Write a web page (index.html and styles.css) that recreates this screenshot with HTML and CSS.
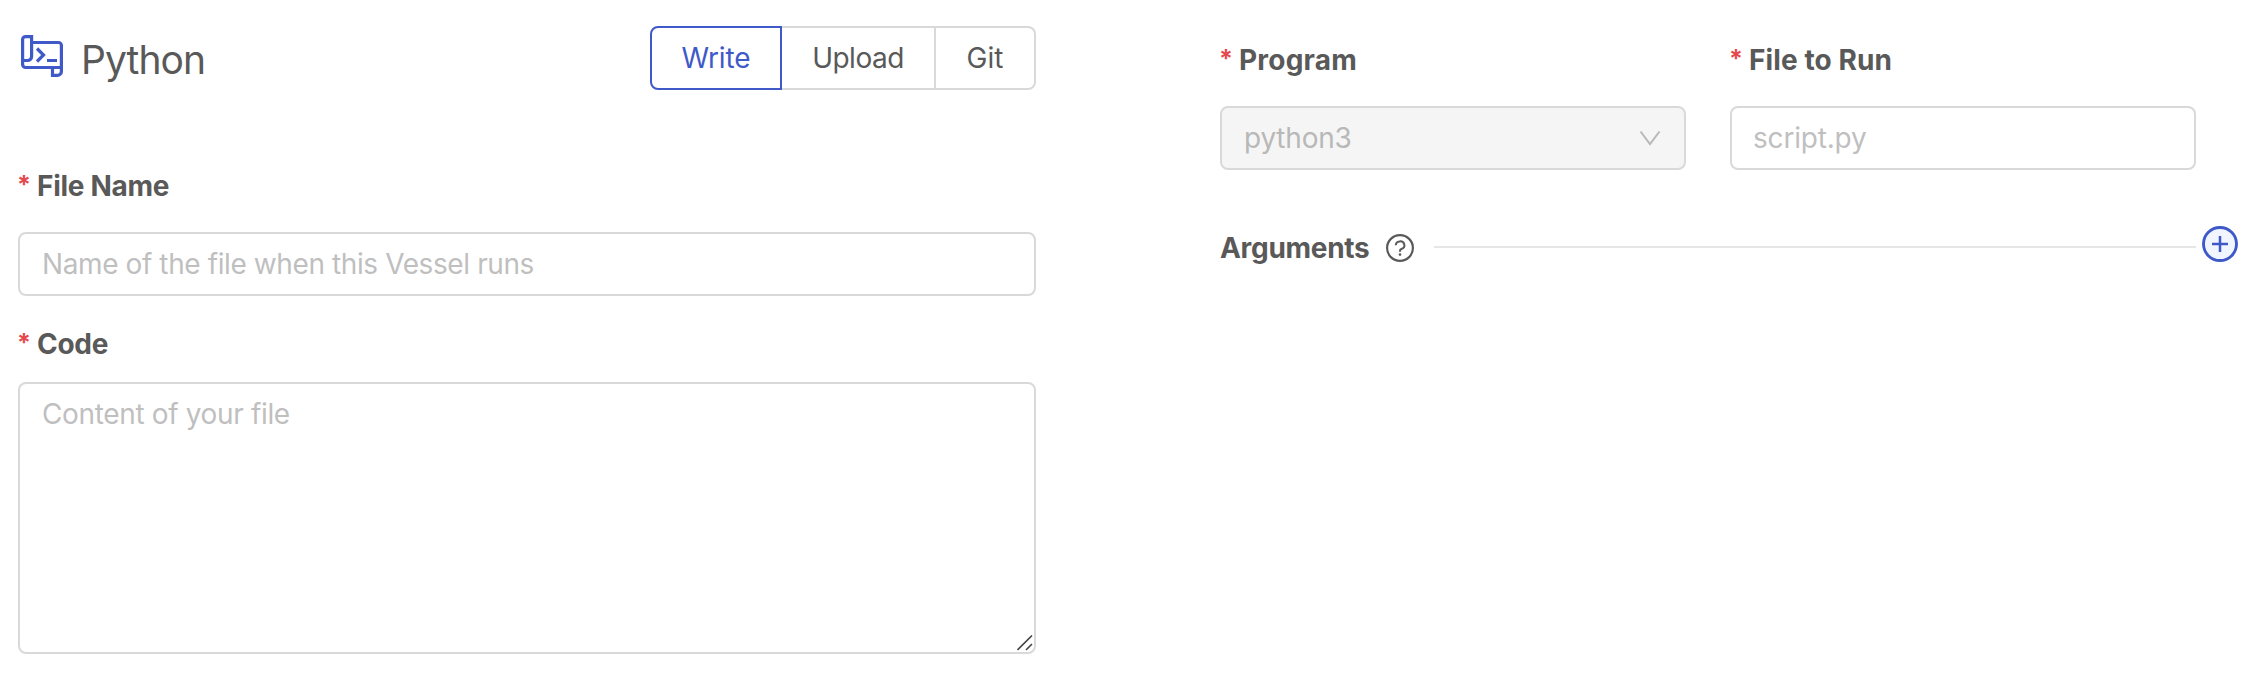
FILE: index.html
```html
<!DOCTYPE html>
<html lang="en">
<head>
<meta charset="utf-8">
<title>Python</title>
<link rel="stylesheet" href="styles.css">
</head>
<body>
<main class="page">
  <section class="source">
    <header class="source-head">
      <svg class="logo" width="42" height="42" viewBox="0 0 42 42" fill="none" stroke="currentColor" stroke-width="3.200">
        <path d="M1.600 26V4.600a3 3 0 0 1 3-3h6V21.500a4 4 0 0 1-4 4H1.600"/>
        <path d="M12 7.500H37.400a3 3 0 0 1 3 3V32.500H4.600a3 3 0 0 1-3-3V24"/>
        <path d="M31.500 32.500v7.900H36.400a4 4 0 0 0 4-4V31"/>
        <path d="M16 13.500l6.500 6.500-6.500 6.500M26 25.500h10"/>
      </svg>
      <h1 class="title">Python</h1>
      <div class="tabs">
        <button class="tab tab-active">Write</button>
        <button class="tab tab-upload">Upload</button>
        <button class="tab tab-git">Git</button>
      </div>
    </header>
    <label class="label label-name"><span class="star">*</span>File Name</label>
    <input class="field f-name" placeholder="Name of the file when this Vessel runs">
    <label class="label label-code"><span class="star">*</span>Code</label>
    <div class="area-wrap">
      <textarea class="field area" placeholder="Content of your file"></textarea>
      <svg class="grip" width="16" height="16" viewBox="0 0 16 16" fill="none" stroke="#444" stroke-width="1.600"><path d="M.5 15L15 .5M9 15l6-6"/></svg>
    </div>
  </section>
  <section class="run">
    <div class="cols">
      <div class="col">
        <label class="label label-program"><span class="star">*</span>Program</label>
        <div class="field select">python3
          <svg width="22" height="16" viewBox="0 0 22 16" fill="none" stroke="#b8b8b8" stroke-width="2"><path d="M1.500 1.500L11 14 20.500 1.500"/></svg>
        </div>
      </div>
      <div class="col">
        <label class="label label-run"><span class="star">*</span>File to Run</label>
        <input class="field f-script" placeholder="script.py">
      </div>
    </div>
    <div class="args">
      <span class="args-title">Arguments</span>
      <svg class="help" width="28" height="28" viewBox="0 0 28 28" fill="none" stroke="currentColor" stroke-width="2.200"><circle cx="14" cy="14" r="12.900"/><path d="M9.800 11.300a4.300 3.900 0 1 1 5.600 3.700c-1 .4-1.400 1-1.400 1.900v.9" stroke-width="2"/><circle cx="14" cy="20.600" r="1.300" fill="currentColor" stroke="none"/></svg>
      <span class="rule"></span>
      <svg class="plus" width="36" height="36" viewBox="0 0 36 36" fill="#f0f5ff" stroke="currentColor" stroke-width="2.900"><circle cx="18" cy="18" r="16.500"/><path d="M18 10v16M10 18h16" stroke-width="2.500"/></svg>
    </div>
  </section>
</main>
</body>
</html>
```
FILE: styles.css
```css
* { box-sizing: border-box; }
body { margin: 0; background: #fff; color: #595959; font: 28px/44px Inter, "Liberation Sans", sans-serif; }
.page { display: flex; width: 2256px; height: 678px; }
.source { width: 1036px; padding: 26px 0 0 18px; }
.source-head { display: flex; height: 64px; padding-left: 3px; }
.logo { margin-top: 9px; color: #3f59c9; }
.title { margin: 2px 0 0 18px; font-size: 39px; font-weight: 400; line-height: 64px; letter-spacing: -.9px; }
.tabs { display: flex; margin-left: auto; }
.tab { height: 64px; padding: 0; border: 2px solid #d9d9d9; border-left: 0; background: #fff; color: inherit; font: inherit; text-align: center; }
.tab-active { width: 132px; border: 2px solid #3f59c9; border-radius: 8px 0 0 8px; color: #3f59c9; letter-spacing: -.1px; }
.tab-upload { width: 154px; letter-spacing: -.5px; }
.tab-git { width: 100px; border-radius: 0 8px 8px 0; }
.label { display: flex; height: 44px; font-weight: 650; letter-spacing: -.3px; white-space: nowrap; }
.star { width: 19px; margin-left: -1px; margin-right: 1px; color: #e5484d; font-weight: 700; font-size: 25px; line-height: 43px; }
.label-name { margin-top: 74px; }
.label-program { letter-spacing: .2px; }
.label-run { letter-spacing: .1px; }
.field { display: block; width: 100%; height: 64px; padding: 0 22px; border: 2px solid #d9d9d9; border-radius: 8px; outline: 0; background: #fff; font: inherit; }
.field::placeholder { color: #bfbfbf; opacity: 1; }
.f-name { margin-top: 24px; letter-spacing: -.4px; }
.f-script { padding-left: 21px; letter-spacing: -.2px; }
.label-code { margin-top: 26px; }
.area-wrap { position: relative; margin-top: 16px; }
.area { height: 272px; padding: 8px 22px; resize: none; letter-spacing: -.35px; }
.grip { position: absolute; right: 3px; bottom: 3px; }
.run { margin-left: 184px; width: 1018px; padding-top: 38px; }
.cols { display: flex; gap: 44px; }
.col { width: 466px; }
.col .field { margin-top: 24px; }
.select { display: flex; align-items: center; justify-content: space-between; padding-right: 23px; background: #f5f5f5; color: #b8b8b8; letter-spacing: -.2px; }
.args { display: flex; align-items: center; height: 44px; margin-top: 56px; }
.args-title { width: 166px; font-weight: 650; letter-spacing: -.3px; }
.help { flex: none; }
.rule { flex: none; width: 762px; height: 2px; margin: 0 0 2px 20px; background: #e6e6e6; }
.plus { flex: none; margin: 0 0 8px 6px; color: #3f59c9; }
```
